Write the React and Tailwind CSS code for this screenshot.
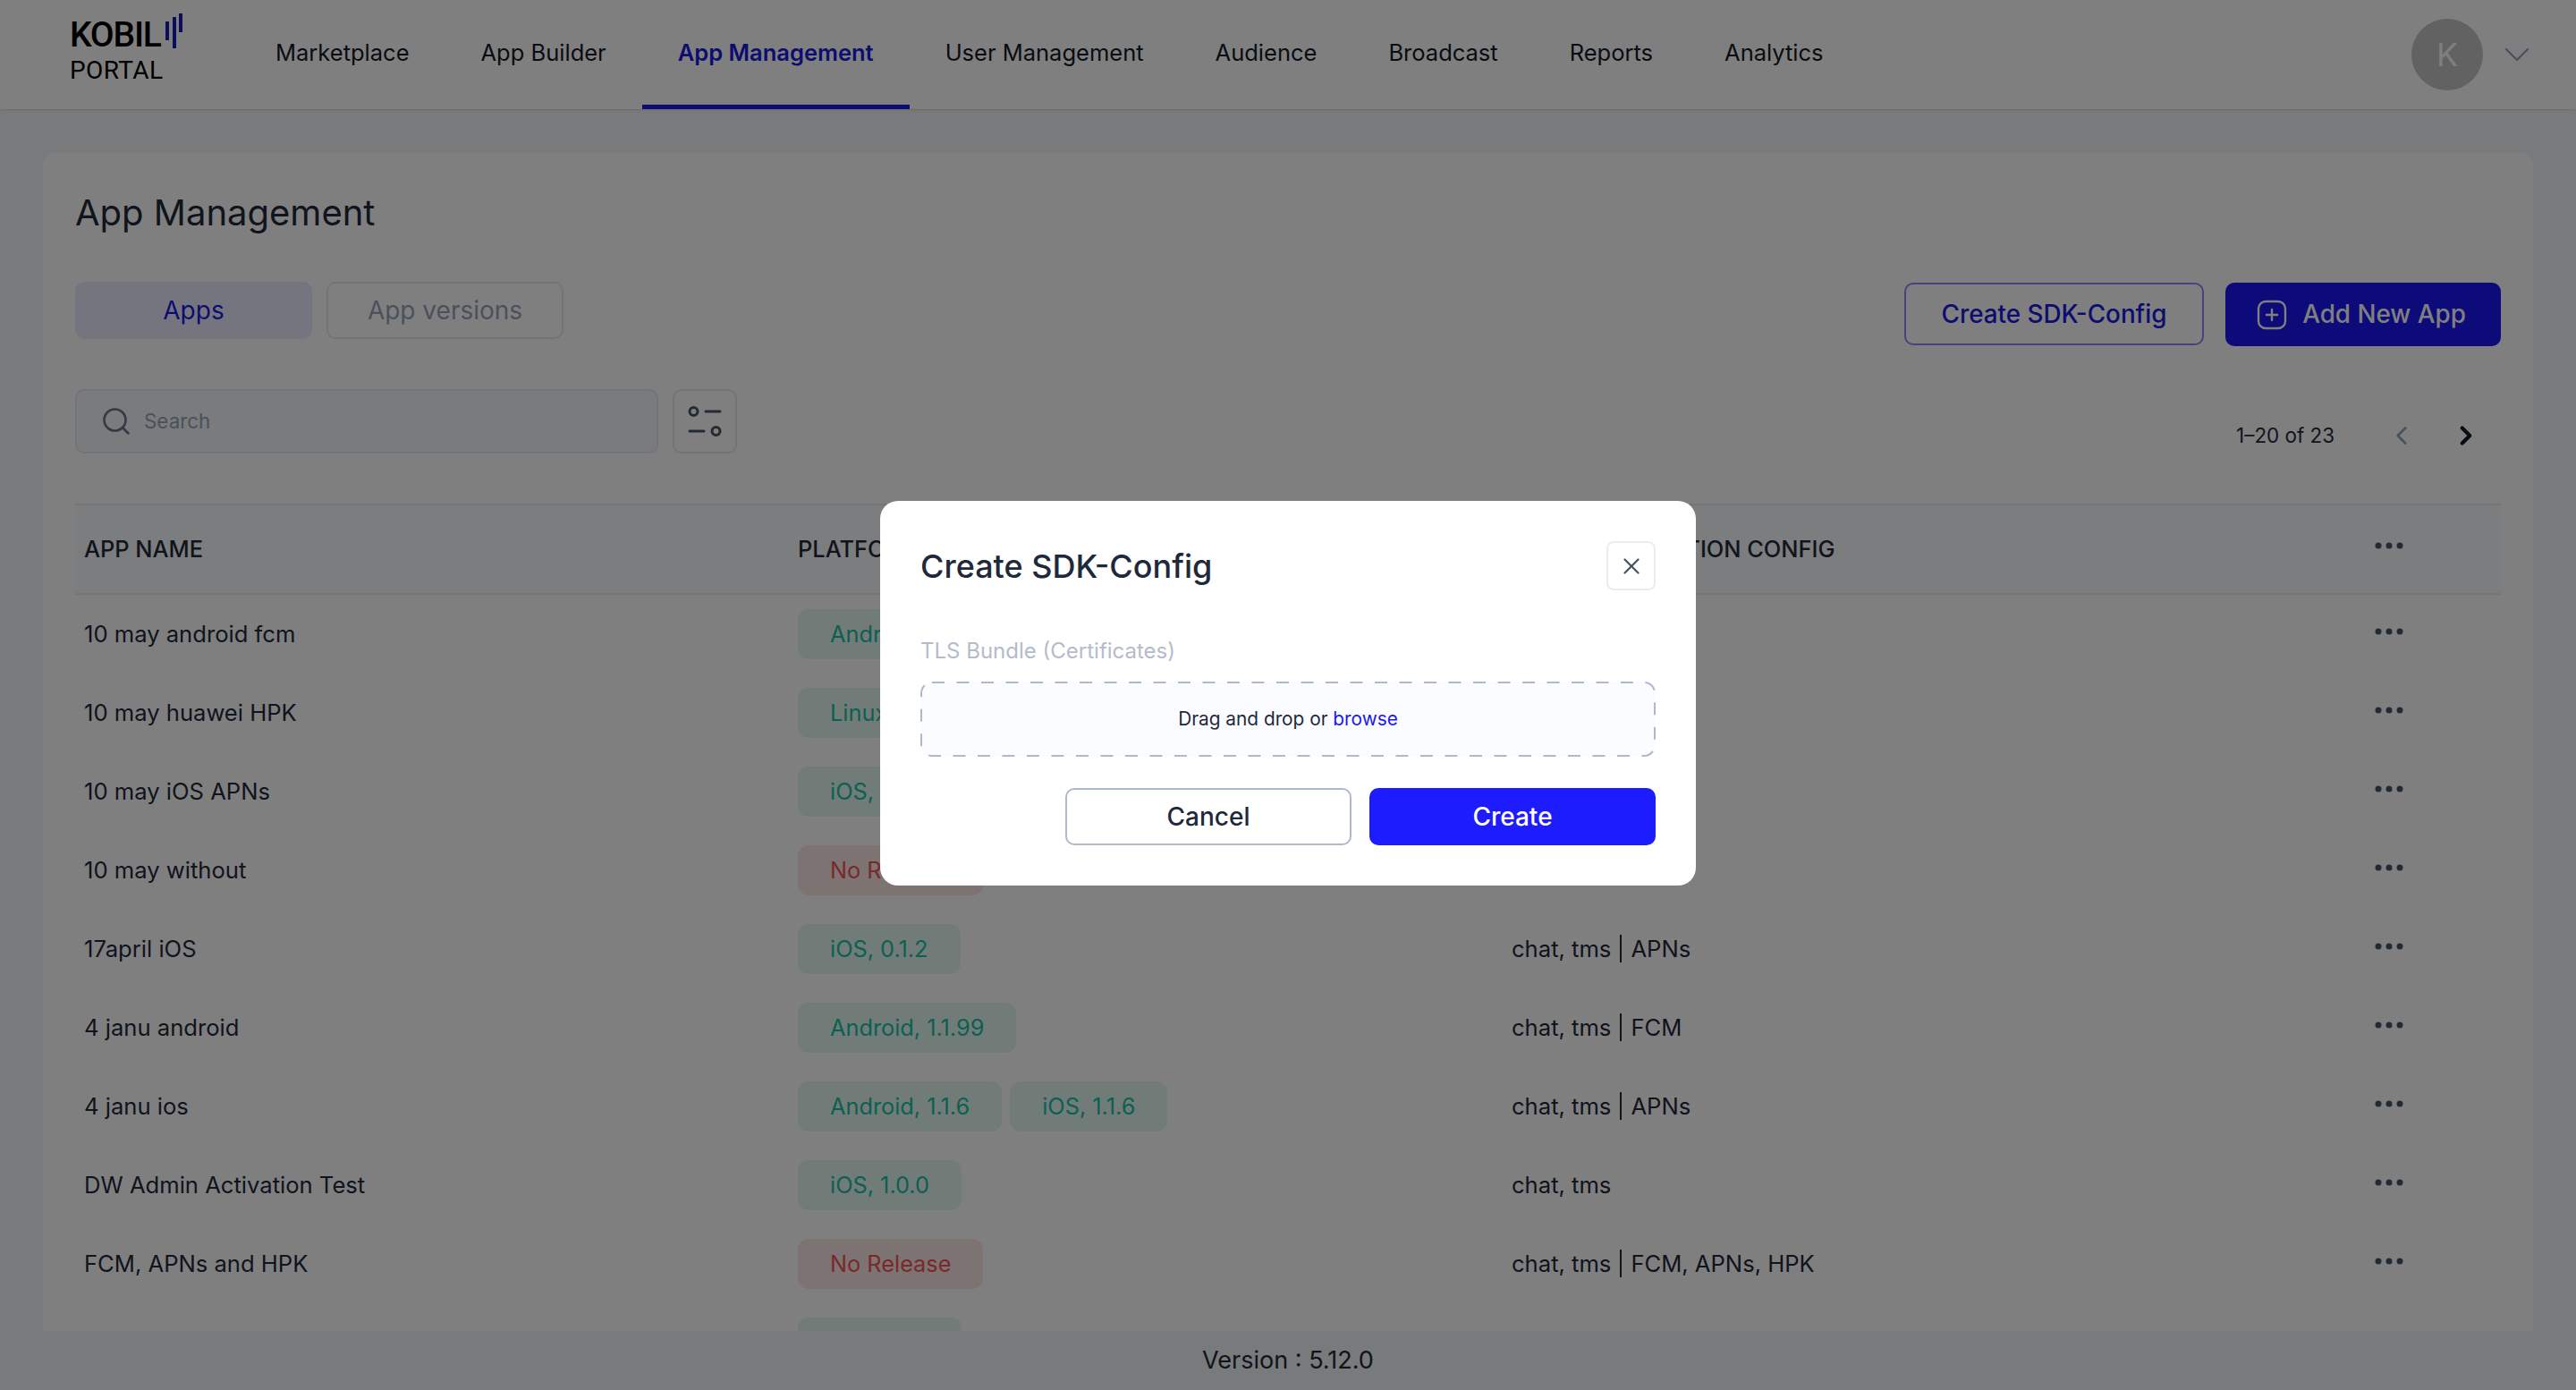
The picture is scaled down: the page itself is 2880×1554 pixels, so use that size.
import React from "react";
import { Search, ChevronDown, ChevronLeft, ChevronRight, X } from "lucide-react";

const nav = ["Marketplace", "App Builder", "App Management", "User Management", "Audience", "Broadcast", "Reports", "Analytics"];

const rows = [
  ["10 may android fcm", [["Android, 1.0.0", "g"]], "chat, tms", "FCM"],
  ["10 may huawei HPK", [["Linux, 1.0.0", "g"]], "chat, tms", "HPK"],
  ["10 may iOS APNs", [["iOS, 1.0.0", "g"]], "chat, tms", "APNs"],
  ["10 may without", [["No Release", "r"]], "chat, tms", ""],
  ["17april iOS", [["iOS, 0.1.2", "g"]], "chat, tms", "APNs"],
  ["4 janu android", [["Android, 1.1.99", "g"]], "chat, tms", "FCM"],
  ["4 janu ios", [["Android, 1.1.6", "g"], ["iOS, 1.1.6", "g"]], "chat, tms", "APNs"],
  ["DW Admin Activation Test", [["iOS, 1.0.0", "g"]], "chat, tms", ""],
  ["FCM, APNs and HPK", [["No Release", "r"]], "chat, tms", "FCM, APNs, HPK"],
  ["", [["iOS, 1.0.0", "g"]], "", ""],
];

function Dots() {
  return (
    <svg width="32" height="8" viewBox="0 0 32 8" className="block" fill="#475569">
      <circle cx="4" cy="4" r="3.5" />
      <circle cx="16" cy="4" r="3.5" />
      <circle cx="28" cy="4" r="3.5" />
    </svg>
  );
}

function Chip({ label, tone }) {
  return (
    <span
      className={
        tone === "g"
          ? "flex h-[56px] items-center rounded-[12px] bg-[#e3f8f1] px-[36px] text-[25.3px] text-[#17c0a5]"
          : "flex h-[56px] items-center rounded-[12px] bg-[#fde6e6] px-[36px] text-[25.3px] text-[#f05252]"
      }
    >
      {label}
    </span>
  );
}

export default function App() {
  return (
    <div className="relative flex h-screen flex-col overflow-hidden bg-[#f2f4f7] font-['Inter',sans-serif] text-[#1e293b]">
      <header className="flex h-[122px] shrink-0 items-stretch bg-white pl-[80px] pr-[42px] shadow-sm">
        <div className="flex w-[188px] shrink-0 flex-col pt-[15px]">
          <div className="flex items-start">
            <span className="-ml-[2px] mt-[5px] h-[38px] font-['Roboto',sans-serif] text-[39px] leading-[38px] font-medium tracking-[-1.2px] text-black">KOBIL</span>
            <svg width="22" height="40" viewBox="0 0 22 40" className="ml-[3px] block">
              <rect x="2" y="9" width="4" height="21" fill="#1d1cc0" />
              <rect x="10" y="4" width="4" height="35" fill="#1d1cc0" />
              <rect x="17" y="0" width="4" height="21" fill="#1d1cc0" />
            </svg>
          </div>
          <span className="-ml-[2px] mt-[7px] font-['Roboto',sans-serif] text-[28px] leading-[27px] tracking-[0.4px] text-black">PORTAL</span>
        </div>
        <nav className="flex items-stretch">
          {nav.map((n) => (
            <div
              key={n}
              className={
                n === "App Management"
                  ? "flex items-center border-b-[5px] border-[#1a18e0] px-[40px] pb-[5px] pt-[6px] text-[25.5px] font-semibold text-[#1a18e0]"
                  : "flex items-center border-b-[5px] border-transparent px-[40px] pb-[5px] pt-[6px] text-[25.5px] text-[#111827]"
              }
            >
              {n}
            </div>
          ))}
        </nav>
        <div className="ml-auto flex items-center gap-[14px]">
          <div className="flex h-[80px] w-[80px] items-center justify-center rounded-full bg-[#c4c4c4] text-[36px] text-white">K</div>
          <ChevronDown size={48} strokeWidth={1.2} className="text-[#94a3b8]" />
        </div>
      </header>

      <main className="flex min-h-0 flex-1 flex-col px-[48px] pt-[48px]">
        <section className="flex min-h-0 flex-1 flex-col overflow-hidden rounded-t-[16px] bg-white px-[36px] pt-[38px]">
          <h1 className="text-[40px] leading-[60px] font-normal">App Management</h1>
          <div className="mt-[47px] flex items-start justify-between">
            <div className="flex gap-[16px]">
              <div className="flex h-[64px] w-[265px] items-center justify-center rounded-[10px] bg-[#ebebff] text-[28px] text-[#1a18e0]">Apps</div>
              <div className="flex h-[64px] w-[265px] items-center justify-center rounded-[10px] border-2 border-[#e2e8f0] text-[28px] text-[#94a3b8]">App versions</div>
            </div>
            <div className="mt-px flex gap-[24px]">
              <button className="flex h-[70px] w-[335px] items-center justify-center rounded-[10px] border-2 border-[#8886ff] bg-white pt-px text-[27.8px] font-medium text-[#1a18e0]">Create SDK-Config</button>
              <button className="flex h-[71px] w-[308px] items-center justify-center gap-[17px] rounded-[10px] bg-[#1a14f5] pt-px text-[27.8px] font-medium text-white">
                <svg width="34" height="34" viewBox="0 0 34 34" fill="none" stroke="currentColor" strokeWidth="2.4" strokeLinecap="round" className="-ml-[4px]">
                  <rect x="2" y="2" width="30" height="30" rx="8" />
                  <path d="M17 11v12M11 17h12" />
                </svg>
                Add New App
              </button>
            </div>
          </div>
          <div className="mt-[48px] flex items-start">
            <div className="flex h-[72px] w-[652px] items-center gap-[13px] rounded-[10px] border-2 border-[#e2e8f0] bg-[#f5f7fa] px-[26px] text-[22.4px] text-[#94a3b8]">
              <Search size={36} strokeWidth={1.7} className="text-[#64748b]" />
              Search
            </div>
            <div className="ml-[16px] flex h-[72px] w-[72px] items-center justify-center rounded-[10px] border-2 border-[#e2e8f0]">
              <svg width="38" height="36" viewBox="0 0 38 36" fill="none" stroke="#475569" strokeWidth="3" strokeLinecap="round">
                <circle cx="6.5" cy="7" r="4.5" />
                <path d="M20 7h16" />
                <path d="M2 29h16" />
                <circle cx="31.5" cy="29" r="4.5" />
              </svg>
            </div>
            <div className="ml-auto mt-[35px] flex h-[34px] items-center pr-[22px] text-[22.4px] text-[#1e293b]">
              <span>1–20 of 23</span>
              <ChevronLeft size={34} strokeWidth={2} className="ml-[58px] text-[#94a3b8]" />
              <ChevronRight size={34} strokeWidth={3} className="ml-[38px] text-[#111827]" />
            </div>
          </div>
          <div className="mt-[56px] grid h-[102px] shrink-0 grid-cols-[798px_798px_965px_1fr] items-center border-y-2 border-[#e9edf3] bg-[#f8fafc] pl-[10px] text-[25.4px] font-medium">
            <span>APP NAME</span>
            <span>PLATFORM</span>
            <span>PUSH NOTIFICATION CONFIG</span>
            <span className="-mt-[8px]"><Dots /></span>
          </div>
          {rows.map((r, i) => (
            <div key={i} className="grid h-[88px] shrink-0 grid-cols-[798px_798px_965px_1fr] items-center pl-[10px] text-[25.6px]">
              <span>{r[0]}</span>
              <div className="flex gap-[9px]">
                {r[1].map((c) => (
                  <Chip key={c[0]} label={c[0]} tone={c[1]} />
                ))}
              </div>
              <div className="flex items-center">
                <span>{r[2]}</span>
                {r[3] && <span className="mx-[10px] h-[31px] w-[2px] bg-[#1e293b]" />}
                <span>{r[3]}</span>
              </div>
              <span className="-mt-[6px]"><Dots /></span>
            </div>
          ))}
        </section>
      </main>
      <footer className="flex h-[66px] shrink-0 items-center justify-center text-[27px]">Version : 5.12.0</footer>

      <div className="fixed inset-0 flex items-center justify-center bg-black/50">
        <div className="-mt-[4px] flex h-[430px] w-[912px] flex-col rounded-[20px] bg-white px-[45px] pt-[45px]">
          <div className="flex h-[55px] items-center justify-between">
            <h2 className="text-[36px] font-medium">Create SDK-Config</h2>
            <button className="flex h-[55px] w-[55px] items-center justify-center rounded-[8px] border-2 border-[#e9edf3]">
              <X size={30} strokeWidth={1.8} className="text-[#475569]" />
            </button>
          </div>
          <label className="mt-[52px] text-[24px] leading-[32px] text-[#b4bccc]">TLS Bundle (Certificates)</label>
          <div className="relative mt-[18px] flex h-[84px] items-center justify-center rounded-[12px] bg-[#fbfcff] text-[20.8px]">
            <svg className="absolute inset-0 h-full w-full" fill="none">
              <rect x="1" y="1" width="820" height="82" rx="12" stroke="#b0b8cc" strokeWidth="2" strokeDasharray="14 13.5" />
            </svg>
            <span>Drag and drop or <span className="text-[#1a18f5]">browse</span></span>
          </div>
          <div className="mt-[35px] flex justify-end gap-[20px]">
            <button className="flex h-[64px] w-[320px] items-center justify-center rounded-[10px] border-2 border-[#b0b8cc] bg-white text-[28px] font-medium">Cancel</button>
            <button className="flex h-[64px] w-[320px] items-center justify-center rounded-[10px] bg-[#1c1cff] text-[28px] font-medium text-white">Create</button>
          </div>
        </div>
      </div>
    </div>
  );
}
